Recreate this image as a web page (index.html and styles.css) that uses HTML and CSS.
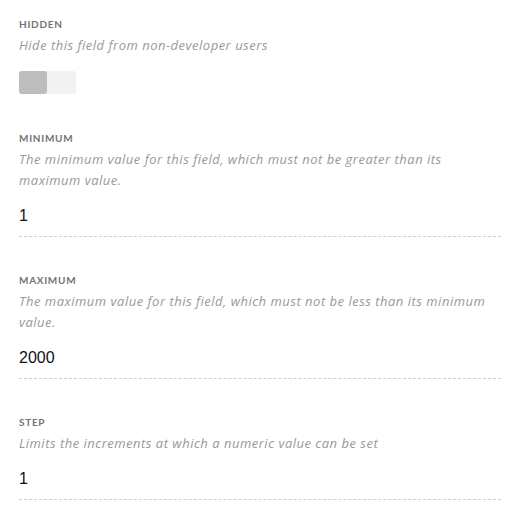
FILE: index.html
```html
<!DOCTYPE html>
<html lang="en">
<head>
<meta charset="utf-8">
<title>Number field settings</title>
<link rel="stylesheet" href="styles.css">
</head>
<body>
<div class="panel">
  <section class="field">
    <div class="label">HIDDEN</div>
    <div class="desc">Hide this field from non-developer users</div>
    <div class="toggle"><span class="knob"></span></div>
  </section>
  <section class="field">
    <div class="label">MINIMUM</div>
    <div class="desc">The minimum value for this field, which must not be greater than its maximum value.</div>
    <div class="value">1</div>
  </section>
  <section class="field">
    <div class="label">MAXIMUM</div>
    <div class="desc">The maximum value for this field, which must not be less than its minimum value.</div>
    <div class="value">2000</div>
  </section>
  <section class="field">
    <div class="label">STEP</div>
    <div class="desc">Limits the increments at which a numeric value can be set</div>
    <div class="value">1</div>
  </section>
</div>
</body>
</html>
```
FILE: styles.css
```css
html, body {
  margin: 0;
  padding: 0;
  background: #ffffff;
}
body {
  font-family: Lato, "Noto Sans", sans-serif;
}
.panel {
  display: flex;
  flex-direction: column;
  gap: 36px;
  padding: 17px 19px 0 19px;
}
.field {
  display: flex;
  flex-direction: column;
}
.field:first-child {
  margin-bottom: 1px;
}
.label {
  font-size: 10px;
  line-height: 14px;
  font-weight: 700;
  letter-spacing: 0.7px;
  color: #737373;
}
.desc {
  margin-top: 4px;
  font-family: "Open Sans", "Noto Sans", sans-serif;
  font-size: 13px;
  line-height: 21px;
  font-style: italic;
  font-weight: 400;
  letter-spacing: 0.5px;
  color: #999999;
}
.toggle {
  margin-top: 15px;
  width: 57px;
  height: 23px;
  background: #f2f2f2;
  border-radius: 3px;
  display: flex;
}
.knob {
  width: 28px;
  height: 23px;
  background: #bdbdbd;
  border-radius: 3px;
}
.value {
  margin-top: 15px;
  font-family: "Liberation Sans", Arial, sans-serif;
  font-size: 16px;
  line-height: 20px;
  color: #111111;
  padding-bottom: 10px;
  border-bottom: 1px dashed #cfcfcf;
}
```
